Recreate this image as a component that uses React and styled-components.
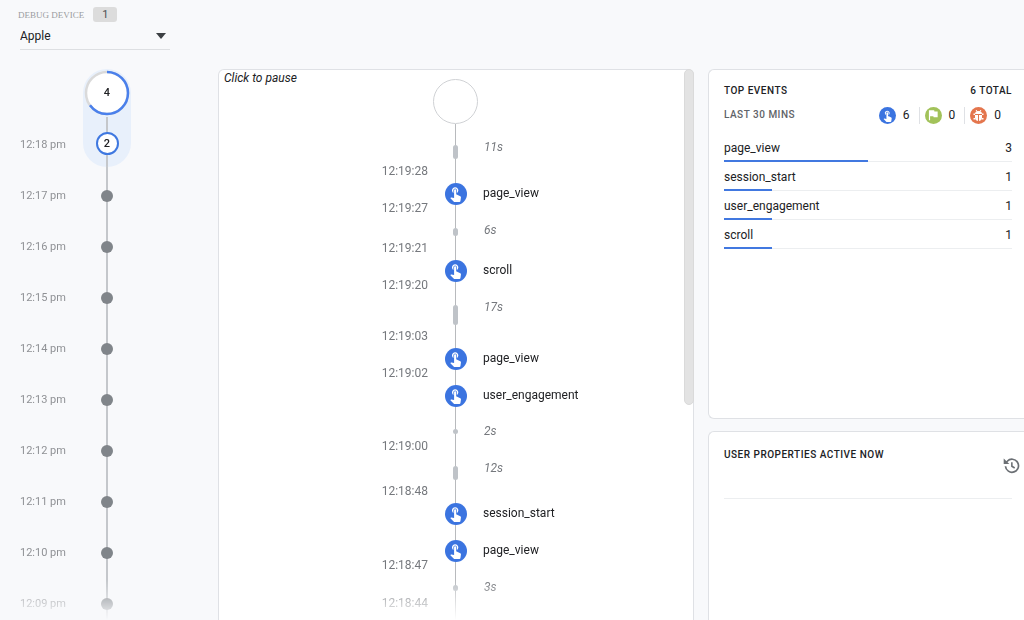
import React from "react";
import styled, { createGlobalStyle, css } from "styled-components";
import { MdFlag, MdTouchApp } from "react-icons/md";

const GlobalStyle = createGlobalStyle`
  * {
    box-sizing: border-box;
  }
  body {
    background-color: #f8f9fb;
    color: #202124;
    font-family: Roboto, "Liberation Sans", sans-serif;
    font-size: 12px;
    line-height: 16px;
    margin: 0;
  }
  ul, ol {
    list-style: none;
    margin: 0;
    padding: 0;
  }
`;

const Page = styled.div`
  display: flex;
  flex-direction: column;
  height: 100vh;
  overflow: hidden;
`;
const Header = styled.header`
  flex: none;
  height: 69px;
  padding: 7px 18px 0;
`;
const DeviceRow = styled.div`
  align-items: center;
  display: flex;
  gap: 9px;
  height: 15px;
`;
const DeviceLabel = styled.label`
  color: #9a9ca0;
  font-family: "Liberation Serif", serif;
  font-size: 9px;
`;
const DeviceCount = styled.span`
  background-color: #dcdcdc;
  border-radius: 3px;
  color: #4d4f52;
  font-size: 11px;
  line-height: 15px;
  text-align: center;
  width: 24px;
`;
const SelectBox = styled.div`
  align-items: center;
  border-bottom: 1px solid #dddfe2;
  display: flex;
  height: 28px;
  margin-left: 2px;
  position: relative;
  width: 150px;

  svg {
    pointer-events: none;
    position: absolute;
    right: 4px;
  }
`;
const Select = styled.select`
  appearance: none;
  background: none;
  border: none;
  color: #202124;
  font-family: inherit;
  font-size: 12px;
  height: 100%;
  padding: 0;
  width: 100%;
`;

const Main = styled.main`
  display: flex;
  flex: 1;
  min-height: 0;
`;
const fadeOut = css`
  mask-image: linear-gradient(to bottom, #000 calc(100% - 40px), transparent);
`;

const MinuteRail = styled.section`
  ${fadeOut}
  display: flex;
  flex: none;
  overflow: hidden;
  width: 218px;
`;
const MinuteLabels = styled.ol`
  color: #8f9195;
  font-size: 11px;
  padding: 50px 0 0 20px;
  width: 83px;
`;
const MinuteLabel = styled.li`
  line-height: 51px;
`;
const MinuteTrack = styled.div`
  width: 48px;
`;
const ActivePill = styled.div`
  align-items: center;
  background: linear-gradient(#c4c7cb, #c4c7cb) center 48px / 2px 100% no-repeat #e8f0fb;
  border-radius: 24px;
  display: flex;
  flex-direction: column;
  gap: 16px;
  height: 98px;
`;
const Ring = styled.div`
  display: grid;
  height: 47px;
  place-items: center;
  width: 46px;

  > * {
    grid-area: 1 / 1;
  }
`;
const RingValue = styled.span`
  font-size: 11px;
  font-weight: 500;
`;
const MinuteNode = styled.div`
  background-color: #fff;
  border: 2px solid #3f78e0;
  border-radius: 50%;
  font-size: 11px;
  font-weight: 500;
  height: 23px;
  line-height: 19px;
  text-align: center;
  width: 23px;
`;
const MinuteDots = styled.div`
  background: linear-gradient(#c4c7cb, #c4c7cb) center / 2px 100% no-repeat;
  padding-top: 3px;
`;
const MinuteDot = styled.div`
  display: grid;
  height: 51px;
  place-items: center;

  &::before {
    background-color: #80858a;
    border-radius: 50%;
    content: "";
    height: 12px;
    width: 12px;
  }
`;

const StreamPane = styled.section`
  background-color: #fff;
  border: 1px solid #dfe1e5;
  border-bottom: none;
  border-radius: 6px 6px 0 0;
  flex: 1;
  min-width: 0;
  position: relative;
`;
const StreamBody = styled.div`
  ${fadeOut}
  height: 100%;
  overflow: hidden;
  padding-right: 1px;
`;
const PauseButton = styled.button`
  background: none;
  border: none;
  color: #202124;
  font-family: inherit;
  font-size: 12px;
  font-style: italic;
  left: 5px;
  line-height: 16px;
  padding: 0;
  position: absolute;
  top: 0;
`;
const ScrollThumb = styled.div`
  background-color: #e3e3e3;
  border: 1px solid #dadada;
  border-radius: 5px;
  height: 61%;
  position: absolute;
  right: -1px;
  top: -1px;
  width: 10px;
`;
const StreamHead = styled.div`
  background: linear-gradient(#b8babd, #b8babd) center 54px / 1px 100% no-repeat;
  display: flex;
  height: 59px;
  justify-content: center;
  padding-top: 9px;
`;
const EmptyCircle = styled.div`
  border: 1px solid #cfd1d4;
  border-radius: 50%;
  height: 45px;
  width: 45px;
`;
const StreamRow = styled.li`
  display: grid;
  grid-template-columns: 1fr 45px 1fr;
  height: ${props => props.$height}px;
`;
const Time = styled.time`
  align-self: end;
  color: #75787d;
  line-height: 8px;
  padding-right: 5px;
  text-align: right;
`;
const Spine = styled.div`
  background: linear-gradient(#b8babd, #b8babd) center / 1px 100% no-repeat;
  display: grid;
  place-items: center;
`;
const GapBar = styled.div`
  background-color: #bfc3c8;
  border-radius: 3px;
  height: ${props => props.$size}px;
  width: 5px;
`;
const StreamLabel = styled.span`
  line-height: 37px;
  padding-left: 5px;
  ${props => props.$gap && css`
    color: #75787d;
    font-style: italic;
    padding-left: 6px;
  `}
`;
const Badge = styled.span`
  background-color: ${props => props.$color};
  border-radius: 50%;
  color: #fff;
  display: grid;
  height: ${props => props.$size}px;
  place-items: center;
  width: ${props => props.$size}px;
`;

const Side = styled.aside`
  display: flex;
  flex: none;
  flex-direction: column;
  gap: 12px;
  margin-left: 14px;
  width: 316px;
`;
const Card = styled.section`
  background-color: #fff;
  border: 1px solid #dfe1e5;
  border-right: none;
  border-radius: 6px 0 0 6px;
  flex: none;
  min-height: 350px;
`;
const TopCard = styled(Card)`
  padding: 13px 12px 0 15px;
`;
const PropertiesCard = styled(Card)`
  padding: 15px 4px 0 15px;
`;
const CardRow = styled.div`
  display: flex;
  justify-content: space-between;
`;
const Caption = styled.h2`
  font-size: 10px;
  font-weight: 500;
  letter-spacing: 0.05em;
  line-height: 16px;
  margin: 0;
`;
const SubCaption = styled(Caption)`
  color: #5f6368;
  line-height: 32px;
`;
const Stats = styled.div`
  align-items: center;
  display: flex;
  padding-right: 2px;
`;
const Stat = styled.div`
  align-items: center;
  display: flex;
  gap: 7px;
  height: 17px;
  padding: 0 9px 0 5px;

  & + & {
    border-left: 1px solid #dfe1e5;
  }
`;
const EventList = styled.ul`
  margin-top: 2px;
`;
const EventItem = styled.li`
  line-height: 23px;
  padding-top: 4px;
`;
const MeterTrack = styled.div`
  background: linear-gradient(#eceef0, #eceef0) bottom / 100% 1px no-repeat;
`;
const Meter = styled.div`
  background-color: #4178e0;
  height: 2px;
`;
const HistoryButton = styled.button`
  background: none;
  border: none;
  color: #6b6f74;
  display: flex;
  margin-top: 10px;
  padding: 0;
`;
const Divider = styled.hr`
  border: none;
  border-top: 1px solid #eceef0;
  margin: 24px 8px 0 0;
`;

const BLUE = "#3b74e0";

const MINUTES = [
  "12:18 pm", "12:17 pm", "12:16 pm", "12:15 pm", "12:14 pm",
  "12:13 pm", "12:12 pm", "12:11 pm", "12:10 pm", "12:09 pm",
];

// a row with a bar is an idle gap, the others are events
const STREAM = [
  { label: "11s", bar: 14, height: 46, time: "12:19:28" },
  { label: "page_view", height: 37, time: "12:19:27" },
  { label: "6s", bar: 8, height: 40, time: "12:19:21" },
  { label: "scroll", height: 37, time: "12:19:20" },
  { label: "17s", bar: 20, height: 51, time: "12:19:03" },
  { label: "page_view", height: 37, time: "12:19:02" },
  { label: "user_engagement", height: 36 },
  { label: "2s", bar: 5, height: 37, time: "12:19:00" },
  { label: "12s", bar: 14, height: 45, time: "12:18:48" },
  { label: "session_start", height: 37 },
  { label: "page_view", height: 37, time: "12:18:47" },
  { label: "3s", bar: 6, height: 38, time: "12:18:44" },
  { label: "", height: 37, blank: true },
];

const TOP_EVENTS = [
  { name: "page_view", count: 3 },
  { name: "session_start", count: 1 },
  { name: "user_engagement", count: 1 },
  { name: "scroll", count: 1 },
];
const TOTAL = 6;

const BugIcon = () => (
  <svg width="13" height="13" viewBox="0 0 26 26" fill="#fff">
    <path d="M8 2l3 4M18 2l-3 4" fill="none" stroke="#fff" strokeWidth="2" />
    <path d="M6 10a7 6 0 0 1 14 0z" />
    <path d="M6 12h6v12a7 7 0 0 1-6-7zM14 12h6v5a7 7 0 0 1-6 7z" />
    <path d="M3 9h3v3H3zM20 9h3v3h-3zM3 18h3v3H3zM20 18h3v3h-3z" />
  </svg>
);

const HistoryIcon = () => (
  <svg width="17" height="17" viewBox="0 0 24 24" fill="none" stroke="currentColor">
    <path d="M3.500 13a9.200 9.200 0 1 0 2.500-7L3 9" strokeWidth="2.400" />
    <path d="M1 2v8h8z" fill="currentColor" stroke="none" />
    <path d="M12.500 7.500v5.500l4 2.500" strokeWidth="2.200" />
  </svg>
);

const DeviceHeader = () => (
  <Header>
    <DeviceRow>
      <DeviceLabel htmlFor="device">DEBUG DEVICE</DeviceLabel>
      <DeviceCount>1</DeviceCount>
    </DeviceRow>
    <SelectBox>
      <Select id="device" defaultValue="apple">
        <option value="apple">Apple</option>
      </Select>
      <svg width="10" height="6" viewBox="0 0 10 6">
        <path d="M0 0h10L5 6z" fill="#3c4043" />
      </svg>
    </SelectBox>
  </Header>
);

const Minutes = () => (
  <MinuteRail>
    <MinuteLabels>
      {MINUTES.map(minute => <MinuteLabel key={minute}>{minute}</MinuteLabel>)}
    </MinuteLabels>
    <MinuteTrack>
      <ActivePill>
        <Ring>
          <svg width="46" height="46" viewBox="0 0 46 46">
            <circle cx="23" cy="23" r="21" fill="#fff" stroke="#dadada" strokeWidth="2.500" />
            <circle
              cx="23"
              cy="23"
              r="21"
              fill="none"
              stroke="#4a80ec"
              strokeWidth="2.500"
              pathLength="100"
              strokeDasharray="65 35"
              transform="rotate(-90 23 23)"
            />
          </svg>
          <RingValue>4</RingValue>
        </Ring>
        <MinuteNode>2</MinuteNode>
      </ActivePill>
      <MinuteDots>
        {MINUTES.slice(1).map(minute => <MinuteDot key={minute} />)}
      </MinuteDots>
    </MinuteTrack>
  </MinuteRail>
);

const Stream = () => (
  <StreamPane>
    <StreamBody>
      <StreamHead>
        <EmptyCircle />
      </StreamHead>
      <ol>
        {STREAM.map((row, i) => (
          <StreamRow key={i} $height={row.height}>
            <Time>{row.time}</Time>
            <Spine>
              {row.bar && <GapBar $size={row.bar} />}
              {!row.bar && !row.blank && (
                <Badge $color={BLUE} $size={22}>
                  <MdTouchApp size={17} />
                </Badge>
              )}
            </Spine>
            <StreamLabel $gap={Boolean(row.bar)}>{row.label}</StreamLabel>
          </StreamRow>
        ))}
      </ol>
    </StreamBody>
    <PauseButton type="button">Click to pause</PauseButton>
    <ScrollThumb />
  </StreamPane>
);

const TopEvents = () => (
  <TopCard>
    <CardRow>
      <Caption>TOP EVENTS</Caption>
      <Caption as="span">{TOTAL} TOTAL</Caption>
    </CardRow>
    <CardRow>
      <SubCaption as="span">LAST 30 MINS</SubCaption>
      <Stats>
        <Stat>
          <Badge $color={BLUE} $size={17}><MdTouchApp size={13} /></Badge>
          <span>6</span>
        </Stat>
        <Stat>
          <Badge $color="#a2c25a" $size={17}><MdFlag size={14} /></Badge>
          <span>0</span>
        </Stat>
        <Stat>
          <Badge $color="#e4764e" $size={17}><BugIcon /></Badge>
          <span>0</span>
        </Stat>
      </Stats>
    </CardRow>
    <EventList>
      {TOP_EVENTS.map(event => (
        <EventItem key={event.name}>
          <CardRow>
            <span>{event.name}</span>
            <span>{event.count}</span>
          </CardRow>
          <MeterTrack>
            <Meter style={{ width: `${(event.count / TOTAL) * 100}%` }} />
          </MeterTrack>
        </EventItem>
      ))}
    </EventList>
  </TopCard>
);

const UserProperties = () => (
  <PropertiesCard>
    <CardRow>
      <Caption>USER PROPERTIES ACTIVE NOW</Caption>
      <HistoryButton type="button" aria-label="History">
        <HistoryIcon />
      </HistoryButton>
    </CardRow>
    <Divider />
  </PropertiesCard>
);

export default function App() {
  return (
    <Page>
      <GlobalStyle />
      <DeviceHeader />
      <Main>
        <Minutes />
        <Stream />
        <Side>
          <TopEvents />
          <UserProperties />
        </Side>
      </Main>
    </Page>
  );
}
